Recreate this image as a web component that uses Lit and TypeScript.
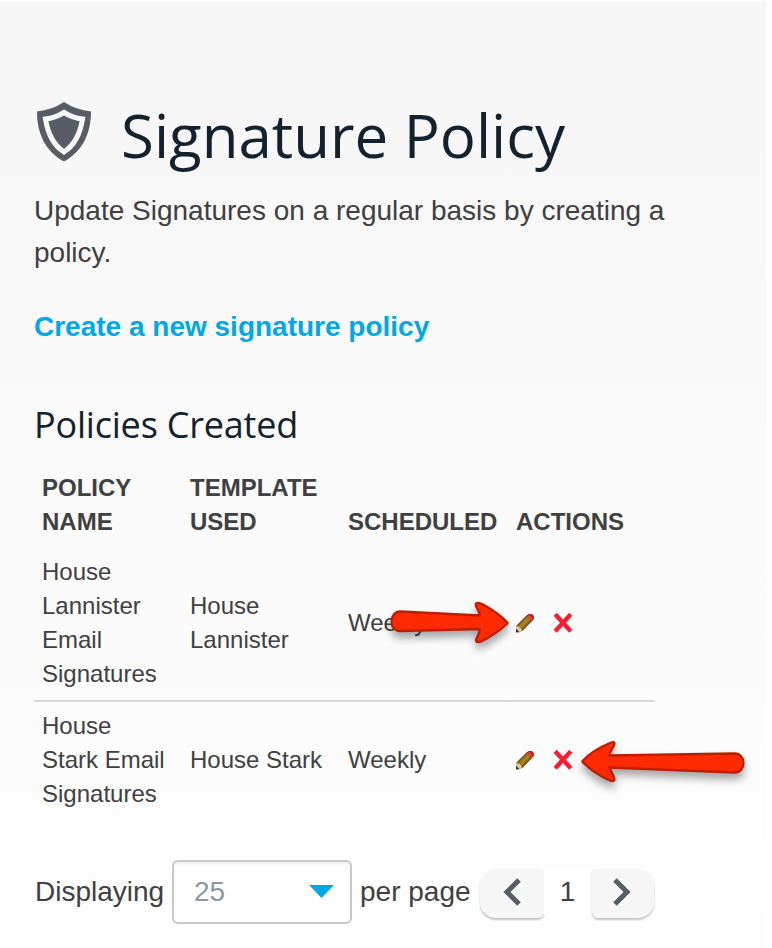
import { LitElement, html, css, svg } from "lit";
import { customElement } from "lit/decorators.js";

const policies = [
  { name: ["House", "Lannister", "Email", "Signatures"], template: ["House", "Lannister"], scheduled: "Weekly", arrow: "edit" },
  { name: ["House", "Stark Email", "Signatures"], template: ["House Stark"], scheduled: "Weekly", arrow: "delete" },
];

const lines = (items: string[]) => items.map((t) => html`<div>${t}</div>`);

const pencil = html`<svg class="pencil" width="20" height="20" viewBox="0 0 20 20">
  <path d="M1 19 1.500 12.500 11.500 2.500 17 8 7.500 18Z" fill="#a97d24"/>
  <path d="M1.500 12.500 11.500 2.500 12.700 3.800 3 14Z" fill="#80601f"/>
  <path d="M6.500 18.500 17 8 15.600 6.700 5.500 17Z" fill="#7a5616"/>
  <path d="M1 19.300 1.500 13.500 4 13.500 6.800 16.500 6.500 18.500Z" fill="#d9c9a4"/>
  <path d="M1 19.500V15.800L4.600 19.200Z" fill="#3d3524"/>
  <path d="M11.300 2.800 13.500 1H17L19 3V6L16.700 8.300Z" fill="#b3262b"/>
  <path d="M12.500 3.500 14 2 17.500 5.500 16 7Z" fill="#f0463c"/>
</svg>`;

const cross = html`<svg class="cross" width="20" height="22" viewBox="0 0 20 22">
  <path d="M2.200 2.200 17.800 19.300M17.800 2.200 2.200 19.300" stroke="#ff1c33" stroke-width="4.400" fill="none"/>
</svg>`;

const arrows: Record<string, { width: number; d: string }> = {
  edit: {
    width: 122,
    d: "M13 13.500 93 17.500C92 12 88.500 9 88.700 6.500C89 4 92 4.500 96 6.500C106 12 114 18 120 24Q121 25 120 26C112 33 104 39 94 43.500C90 45 88 43.500 89.500 40.500C91 37 93 34 92.500 31L13 33C8 33 4.500 29 4.500 23.500C4.500 18 8 13.500 13 13.500Z",
  },
  delete: {
    width: 168,
    d: "M154.500 16.500 29.500 18.500C30 14 33 11 34.300 7.500C35 4.500 33 4.500 29 6.500C18 11 9 17 2.800 23.700Q2 24.500 2.800 25.300C10 32 18 38 29 43C33 45 35 44 34.300 41.500C33.500 37 30 34 29.500 30.500L154.500 35.500C160 35.500 163.500 31 163.500 26C163.500 20.500 160 16.500 154.500 16.500Z",
  },
};

const chevron = (d: string) => html`<svg width="20" height="28" viewBox="0 0 20 28">
  <path d=${d} fill="none" stroke="#565d67" stroke-width="5"/>
</svg>`;

@customElement("app-root")
export class AppRoot extends LitElement {
  static styles = css`
    :host { display: block; box-sizing: border-box; width: 772px; height: 948px; padding-top: 2px; background: #fff; overflow: hidden;
      font-family: "Liberation Sans", Arial, sans-serif; color: #404041; }
    * { box-sizing: border-box; }
    .page { width: 766px; height: 946px; padding: 93px 0 0 34px;
      background: linear-gradient(#f6f6f6, #fefefe); }
    .title { display: flex; height: 82px; }
    .shield { margin: 7px 0 0 2px; flex: none; }
    h1, h2 { margin: 0; font-family: "Open Sans", sans-serif; font-weight: 400; color: #14212e; white-space: nowrap; }
    h1 { font-size: 60px; line-height: 81px; margin-left: 29px; }
    .intro { margin: 13px 0 0; width: 660px; font-size: 28px; line-height: 42px; height: 84px; }
    .create { display: block; margin-top: 32px; line-height: 42px; font-size: 28px; font-weight: 700; color: #00a8e5; text-decoration: none; }
    h2 { font-size: 36px; line-height: 50px; margin-top: 52px; letter-spacing: -0.2px; }
    .table { width: 620px; margin-top: 21px; font-size: 24px; line-height: 34px; }
    .row { display: grid; grid-template-columns: 148px 158px 168px 146px; align-items: center; }
    .row > * { padding-left: 8px; white-space: nowrap; }
    .head { align-items: end; font-weight: 700; height: 68px; }
    .item { height: 163px; border-bottom: 2px solid #d7d7d7; padding-top: 7px; }
    .item:first-of-type, .item:nth-child(2) { padding-top: 6px; }
    .item:last-child { height: 116px; border: 0; padding-top: 0; }
    .actions { position: relative; display: flex; align-items: center; height: 34px; }
    .pencil { margin-left: -1px; }
    .cross { margin-left: 18px; }
    .arrow { position: absolute; overflow: visible; fill: #ff2a00; stroke: #bd1d02; stroke-width: 2.3; stroke-linejoin: round;
      filter: drop-shadow(0 6px 4px rgba(0,0,0,.35)); }
    .edit { left: -121px; top: -8px; }
    .delete { left: 72px; top: -6px; }
    .pager { display: flex; align-items: flex-start; margin-top: 42px; height: 64px; font-size: 28px; line-height: 64px; }
    .word { width: 138px; padding-left: 1px; }
    .select { width: 180px; height: 64px; border: 2px solid #c9c9c9; border-radius: 6px; background: #fff; color: #8b979f;
      display: flex; align-items: center; justify-content: space-between; padding: 0 16px 0 20px; line-height: 60px; box-shadow: inset 0 2px 3px #f0f0f0; }
    .per { width: 128px; padding-left: 8px; white-space: nowrap; }
    .btn { width: 64px; height: 49px; margin-top: 9px; padding: 0 1px 3px 0; background: #f6f6f6; border-radius: 16px 4px 6px 16px; box-shadow: 0 2px 2px #c4c4c4;
      display: flex; align-items: center; justify-content: center; }
    .next { width: 62px; padding-right: 2px; border-radius: 4px 16px 16px 6px; }
    .num { width: 48px; height: 45px; margin-top: 9px; line-height: 46px; background: #fff; text-align: center; padding-right: 1px; }
  `;

  render() {
    return html`<main class="page">
      <header class="title">
        <svg class="shield" width="56" height="60" viewBox="0 0 56 60">
          <path d="M28 0Q40 8 55 9.500C55 31 47 49 28 59.500C9 49 1 31 1 9.500Q16 8 28 0Z" fill="#565d67"/>
          <path d="M28 10.500Q37 16 46.500 17C44 33 38 43.500 28 50C18 43.500 12 33 9.500 17Q19 16 28 10.500Z" fill="#565d67" stroke="#f7f7f7" stroke-width="5"/>
        </svg>
        <h1>Signature Policy</h1>
      </header>
      <p class="intro">Update Signatures on a regular basis by creating a policy.</p>
      <a class="create">Create a new signature policy</a>
      <h2>Policies Created</h2>
      <section class="table">
        <div class="row head">
          <div>${lines(["POLICY", "NAME"])}</div><div>${lines(["TEMPLATE", "USED"])}</div><div>SCHEDULED</div><div>ACTIONS</div>
        </div>
        ${policies.map((p) => html`<div class="row item">
          <div>${lines(p.name)}</div><div>${lines(p.template)}</div><div>${p.scheduled}</div>
          <div class="actions">${pencil}${cross}
            <svg class="arrow ${p.arrow}" width=${arrows[p.arrow].width} height="46">${svg`<path d=${arrows[p.arrow].d}/>`}</svg>
          </div>
        </div>`)}
      </section>
      <footer class="pager">
        <span class="word">Displaying</span>
        <div class="select"><span>25</span><svg width="25" height="14" viewBox="0 0 25 14"><path d="M0 0H25L12.500 13Z" fill="#00a8e5"/></svg></div>
        <span class="per">per page</span>
        <div class="btn">${chevron("M17 2 5 14 17 26")}</div>
        <span class="num">1</span>
        <div class="btn next">${chevron("M3 2 15 14 3 26")}</div>
      </footer>
    </main>`;
  }
}
